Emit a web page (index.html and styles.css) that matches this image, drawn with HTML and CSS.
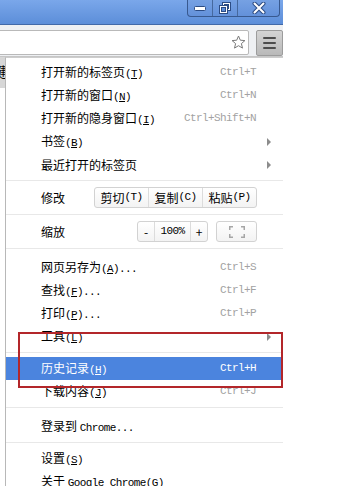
FILE: index.html
```html
<!DOCTYPE html>
<html lang="zh-CN">
<head>
<meta charset="utf-8">
<title>Chrome 菜单</title>
<link rel="stylesheet" href="styles.css">
</head>
<body>
<div class="win">
  <div class="titlebar">
    <div class="winbtns">
      <div class="wb wb-min">
        <svg width="14" height="8" viewBox="0 0 14 8"><rect x="1.5" y="2.5" width="11" height="4" rx="1" fill="#fff" stroke="#2c4c84" stroke-width="1"/></svg>
      </div>
      <div class="wb wb-max">
        <svg width="14" height="14" viewBox="0 0 14 14">
          <rect x="4.5" y="1.5" width="8" height="8" fill="#fff" stroke="#2c4c84"/>
          <rect x="6.5" y="3.5" width="4" height="4" fill="#5f8ed8" stroke="#2c4c84"/>
          <rect x="1.5" y="4.5" width="8" height="8" fill="#fff" stroke="#2c4c84"/>
          <rect x="3.5" y="6.5" width="4" height="4" fill="#5f8ed8" stroke="#2c4c84"/>
        </svg>
      </div>
      <div class="wb wb-close">
        <svg width="14" height="12" viewBox="0 0 14 12">
          <path d="M2.5 1.5 L11.5 10.5 M11.5 1.5 L2.5 10.5" stroke="#2c4c84" stroke-width="4" stroke-linecap="round"/>
          <path d="M2.5 1.5 L11.5 10.5 M11.5 1.5 L2.5 10.5" stroke="#fff" stroke-width="2" stroke-linecap="round"/>
        </svg>
      </div>
    </div>
  </div>
  <div class="toolbar">
    <div class="omni">
      <svg class="star" width="15" height="15" viewBox="0 0 15 15"><path d="M7.5 1 L9.3 5.2 L13.9 5.6 L10.4 8.6 L11.5 13.1 L7.5 10.7 L3.5 13.1 L4.6 8.6 L1.1 5.6 L5.7 5.2 Z" fill="#fff" stroke="#7a7a7a" stroke-width="1" stroke-linejoin="round"/></svg>
    </div>
    <div class="menubtn"><span></span><span></span><span></span></div>
  </div>
  <div class="main">
    <div class="strip"><div class="tabtext">鍵</div></div>
    <div class="menu">
      <div class="grp">
        <div class="item"><span class="lbl">打开新的标签页<span class="a">(<u>T</u>)</span></span><span class="key">Ctrl+T</span></div>
        <div class="item"><span class="lbl">打开新的窗口<span class="a">(<u>N</u>)</span></span><span class="key">Ctrl+N</span></div>
        <div class="item"><span class="lbl">打开新的隐身窗口<span class="a">(<u>I</u>)</span></span><span class="key">Ctrl+Shift+N</span></div>
        <div class="item"><span class="lbl">书签<span class="a">(<u>B</u>)</span></span><span class="arrow"></span></div>
        <div class="item"><span class="lbl">最近打开的标签页</span><span class="arrow"></span></div>
      </div>
      <div class="sep"></div>
      <div class="erow">
        <span class="elbl">修改</span>
        <div class="bgroup">
          <span class="eb eb-w">剪切<span class="a">(T)</span></span>
          <span class="eb eb-w">复制<span class="a">(C)</span></span>
          <span class="eb eb-w">粘贴<span class="a">(P)</span></span>
        </div>
      </div>
      <div class="sep"></div>
      <div class="erow">
        <span class="elbl zl">缩放</span>
        <div class="bgroup">
          <span class="eb eb-s">-</span>
          <span class="eb eb-m"><span class="a">100%</span></span>
          <span class="eb eb-s">+</span>
        </div>
        <div class="bgroup fsbtn">
          <svg width="16" height="12" viewBox="0 0 16 12"><path d="M0.5 4 V0.5 H4 M12 0.5 H15.5 V4 M15.5 8 V11.5 H12 M4 11.5 H0.5 V8" fill="none" stroke="#a6a6a6" stroke-width="2"/></svg>
        </div>
      </div>
      <div class="sep"></div>
      <div class="grp pt">
        <div class="item"><span class="lbl">网页另存为<span class="a">(<u>A</u>)...</span></span><span class="key">Ctrl+S</span></div>
        <div class="item"><span class="lbl">查找<span class="a">(<u>F</u>)...</span></span><span class="key">Ctrl+F</span></div>
        <div class="item"><span class="lbl">打印<span class="a">(<u>P</u>)...</span></span><span class="key">Ctrl+P</span></div>
        <div class="item"><span class="lbl">工具<span class="a">(<u>L</u>)</span></span><span class="arrow"></span></div>
      </div>
      <div class="sep"></div>
      <div class="grp">
        <div class="item hl"><span class="lbl">历史记录<span class="a">(<u>H</u>)</span></span><span class="key">Ctrl+H</span></div>
        <div class="item"><span class="lbl">下载内容<span class="a">(<u>J</u>)</span></span><span class="key">Ctrl+J</span></div>
      </div>
      <div class="sep"></div>
      <div class="grp pt">
        <div class="item"><span class="lbl">登录到 <span class="a">Chrome...</span></span></div>
      </div>
      <div class="sep"></div>
      <div class="grp">
        <div class="item"><span class="lbl">设置<span class="a">(<u>S</u>)</span></span></div>
        <div class="item"><span class="lbl">关于 <span class="a">Google Chrome(<u>G</u>)</span></span></div>
      </div>
    </div>
  </div>
</div>
<div class="mark"></div>
</body>
</html>
```
FILE: styles.css
```css
html, body {
  margin: 0;
  padding: 0;
}
body {
  width: 338px;
  height: 486px;
  overflow: hidden;
  position: relative;
  background: #fff;
  color: #000;
  font-family: "Noto Sans CJK SC", "Liberation Sans", sans-serif;
  font-size: 12px;
  line-height: 1;
}
.win {
  width: 283px;
}
.titlebar {
  height: 24px;
  border-bottom: 1px solid #4169a8;
  background: linear-gradient(#7aa7ea, #5c8ed9);
  display: flex;
  justify-content: flex-end;
  padding-right: 3px;
}
.winbtns {
  display: flex;
  height: 17px;
  box-sizing: border-box;
  border: 1px solid #38598f;
  border-top: none;
  border-radius: 0 0 4px 4px;
  overflow: hidden;
  background: linear-gradient(#76a1e3, #6391da);
}
.wb {
  display: flex;
  align-items: center;
  justify-content: center;
  width: 24px;
}
.wb-max {
  width: 24px;
  border-left: 1px solid #46699f;
}
.wb-close {
  width: 41px;
  border-left: 1px solid #46699f;
}
.toolbar {
  height: 32px;
  box-sizing: border-box;
  padding-top: 5px;
  background: #eef0f3;
  border-bottom: 1px solid #c6c6c6;
  display: flex;
  align-items: flex-start;
}
.omni {
  flex: 1;
  height: 25px;
  margin-left: -4px;
  box-sizing: border-box;
  background: #fff;
  border: 1px solid #b9b9b9;
  border-radius: 2px;
  display: flex;
  align-items: center;
  justify-content: flex-end;
  padding-right: 2px;
}
.star {
  display: block;
}
.menubtn {
  width: 27px;
  height: 26px;
  margin-left: 7px;
  box-sizing: border-box;
  border: 1px solid #9c9c9c;
  border-radius: 2px;
  background: linear-gradient(#d4d4d4, #b9b9b9);
  display: flex;
  flex-direction: column;
  align-items: center;
  justify-content: center;
  gap: 3px;
}
.menubtn span {
  display: block;
  width: 13px;
  height: 2px;
  background: #4d4d4d;
  border-radius: 1px;
}
.main {
  display: flex;
  align-items: flex-start;
}
.strip {
  width: 7px;
  height: 31px;
  background: #d7d7d7;
  overflow: hidden;
}
.tabtext {
  margin-left: -7px;
  padding-top: 7px;
  font-size: 14px;
  white-space: nowrap;
}
.menu {
  flex: 1;
  background: #fff;
  border-left: 1px solid #b8b8b8;
  border-top: 1px solid #cdcdcd;
  padding-top: 3px;
}
.grp.pt {
  padding-top: 3px;
}
.item {
  display: flex;
  align-items: center;
  height: 23px;
  padding-left: 35px;
  padding-right: 12px;
  white-space: nowrap;
}
.lbl {
  flex: 1;
}
.a {
  font-family: "Liberation Mono", monospace;
  font-size: 11px;
  letter-spacing: -0.6px;
}
.a u {
  text-decoration-thickness: 1px;
  text-underline-offset: 1px;
}
.key {
  font-family: "Liberation Mono", monospace;
  font-size: 11px;
  letter-spacing: -0.6px;
  color: #a2a2a2;
  margin-right: 15px;
}
.arrow {
  width: 0;
  height: 0;
  border-left: 4px solid #8c8c8c;
  border-top: 4px solid transparent;
  border-bottom: 4px solid transparent;
}
.item.hl {
  background: #4b84de;
  color: #fff;
}
.item.hl .key {
  color: #fff;
}
.sep {
  height: 1px;
  background: #e8e8e8;
  margin: 4px 0;
}
.erow {
  display: flex;
  align-items: center;
  height: 25px;
  padding-left: 35px;
  padding-right: 26px;
}
.elbl {
  width: 53px;
}
.elbl.zl {
  width: auto;
  flex: 1;
}
.bgroup {
  display: flex;
  height: 21px;
  box-sizing: border-box;
  border: 1px solid #d2d2d2;
  border-radius: 3px;
  background: linear-gradient(#ffffff, #f3f3f3);
}
.eb {
  display: flex;
  align-items: center;
  justify-content: center;
  border-left: 1px solid #dcdcdc;
  white-space: nowrap;
}
.eb:first-child {
  border-left: none;
}
.eb-w {
  width: 53px;
}
.eb-s {
  width: 16px;
}
.eb-m {
  width: 35px;
}
.fsbtn {
  width: 41px;
  margin-left: 8px;
  align-items: center;
  justify-content: center;
}
.mark {
  position: absolute;
  left: 18px;
  top: 332px;
  width: 265px;
  height: 56px;
  box-sizing: border-box;
  border: 2px solid #b3262a;
}
```
